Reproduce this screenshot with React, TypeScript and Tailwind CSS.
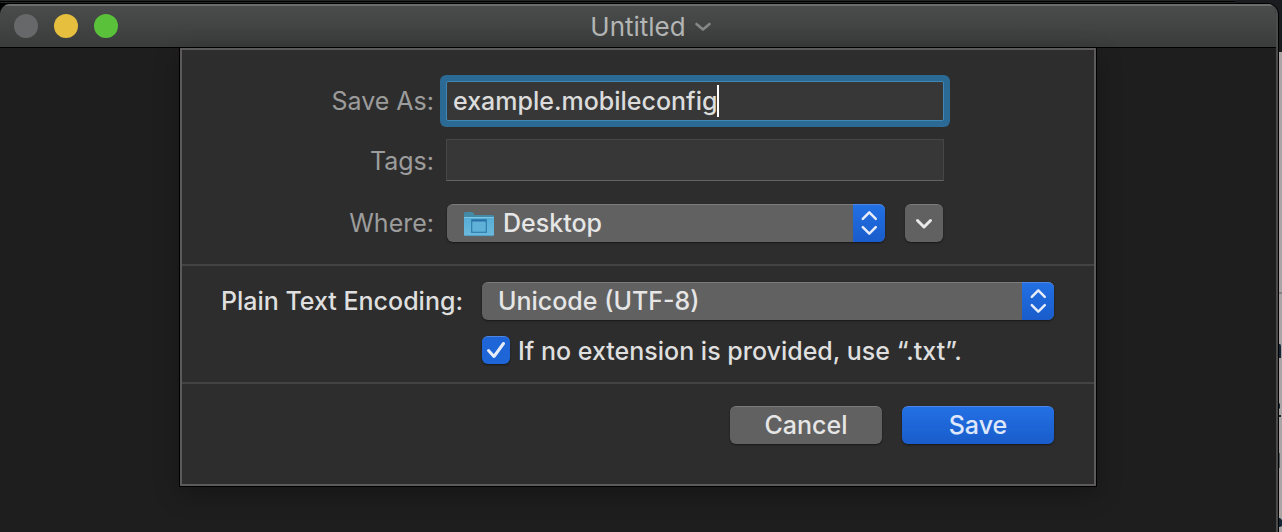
import React, { useState } from "react";

const popupClass =
  "h-full w-full cursor-default appearance-none rounded-md border-t border-[#7b7b7b] bg-[#616161] pb-0.5 pr-12 font-medium text-[#e6e6e6] shadow-[0_1px_2px_rgba(0,0,0,0.5)] outline-none";

function Stepper() {
  return (
    <span className="pointer-events-none absolute inset-y-0 right-0 flex w-8 items-center justify-center rounded-r-md border-t border-[#4c86e6] bg-gradient-to-b from-[#2270e4] to-[#1a5ccb] pb-px">
      <svg width="18" height="26" viewBox="0 0 18 26" fill="none" stroke="#e6edf9" strokeWidth="2.5" strokeLinecap="round" strokeLinejoin="round" aria-hidden="true">
        <path d="M2.800 8.800 9.300 2.300 15.800 8.800M2.800 17.200 9.300 23.700 15.800 17.200" />
      </svg>
    </span>
  );
}

function FolderIcon() {
  return (
    <svg className="pointer-events-none absolute left-[17px] top-2" width="30" height="25" viewBox="0 0 30 25" aria-hidden="true">
      <defs>
        <linearGradient id="folder" x1="0" y1="0" x2="0" y2="1">
          <stop offset="0" stopColor="#55add6" />
          <stop offset="1" stopColor="#6cb9dc" />
        </linearGradient>
      </defs>
      <path d="M0 1.5Q0 0 1.5 0H7.5Q8.8 0 9.5 1.2L10.5 3H28.5Q30 3 30 4.5V8H0Z" fill="#4389a8" />
      <path d="M0 5H30V22.5Q30 24 28.5 24H1.5Q0 24 0 22.5Z" fill="url(#folder)" />
      <path d="M0 5.5H30" stroke="#7cc5e4" />
      <path d="M1 23.7H29" stroke="#4794b8" strokeWidth="0.8" />
      <rect x="7.7" y="7.7" width="14.6" height="12.6" fill="#5fb1d7" stroke="#2f7cae" strokeWidth="1.2" />
      <path d="M8 8.700H22" stroke="#2a6fa9" strokeWidth="1.6" />
    </svg>
  );
}

export default function App() {
  const [name, setName] = useState("example.mobileconfig");
  const [tags, setTags] = useState("");
  const [addExt, setAddExt] = useState(true);

  return (
    <div className="flex min-h-screen bg-[#1b1c20] font-['Inter','Liberation_Sans',sans-serif] text-[25px] leading-8">
      <div className="flex min-w-0 flex-1 flex-col">
        <div className="mr-11 h-[3px] border-y border-[#242525] bg-black" />
        <div className="flex flex-1 flex-col rounded-tr-xl border-r border-t border-black bg-black">
          <main className="flex flex-1 flex-col overflow-hidden rounded-t-[10px] border-r-2 border-[#4b4b4b] bg-[#1e1e1e]">
            <header className="grid h-11 grid-cols-[1fr_auto_1fr] items-center border-b border-black bg-gradient-to-b from-[#4b4d4d] to-[#3a3c3b] shadow-[inset_0_2px_0_#6b6d6d]">
              <div className="flex gap-4 pl-3.5">
                <button type="button" aria-label="Close" className="size-6 rounded-full bg-[#676869]" />
                <button type="button" aria-label="Minimize" className="size-6 rounded-full bg-[#e6bf3f]" />
                <button type="button" aria-label="Zoom" className="size-6 rounded-full bg-[#59c13a]" />
              </div>
              <h1 className="pt-0.5 text-[26px] text-[#b4b6b5]">Untitled</h1>
              <button type="button" aria-label="Document options" className="ml-2 mt-0.5 justify-self-start">
                <svg width="18" height="10" viewBox="0 0 18 10" fill="none" stroke="#858786" strokeWidth="2.6" strokeLinecap="round" strokeLinejoin="round" aria-hidden="true">
                  <path d="m2.5 2 6.5 5.5L15.500 2" />
                </svg>
              </button>
            </header>

            <form
              onSubmit={(e) => e.preventDefault()}
              className="mx-auto w-full max-w-[916px] border-2 border-[#5c5a5b] bg-[#2d2d2d] text-[#dfdfdf] shadow-[0_0_0_1px_#000,0_8px_24px_rgba(0,0,0,0.3)]"
            >
              <section className="grid grid-cols-[252px_minmax(0,498px)] items-center gap-x-3 gap-y-[18px] border-b-2 border-[#434343] pb-[22px] pt-[31px]">
                <label htmlFor="name" className="text-right text-[#9c9c9c]">Save As:</label>
                <div className="flex h-10 items-center rounded-[2px] border border-[#4186b5] bg-[#373737] pl-1.5 shadow-[0_0_0_6px_#2b6a95]">
                  <input
                    id="name"
                    value={name}
                    onChange={(e) => setName(e.target.value)}
                    className="min-w-0 max-w-full bg-transparent font-medium text-[#dcdcdc] caret-transparent outline-none [field-sizing:content]"
                  />
                  <span className="h-8 w-0.5 bg-white" />
                </div>

                <label htmlFor="tags" className="pt-0.5 text-right text-[#9c9c9c]">Tags:</label>
                <input
                  id="tags"
                  value={tags}
                  onChange={(e) => setTags(e.target.value)}
                  className="h-[42px] w-full border border-[#464646] border-b-[#636363] bg-[#373737] px-2 outline-none"
                />

                <label htmlFor="where" className="mt-[5px] text-right text-[#9c9c9c]">Where:</label>
                <div className="mt-[5px] flex gap-5 px-px">
                  <div className="relative h-[38px] min-w-0 flex-1">
                    <select id="where" className={popupClass + " pl-14"}>
                      <option>Desktop</option>
                    </select>
                    <FolderIcon />
                    <Stepper />
                  </div>
                  <button type="button" aria-label="Show more locations" className="flex size-[38px] items-center justify-center rounded-md border-t border-[#7b7b7b] bg-[#616161] shadow-[0_1px_2px_rgba(0,0,0,0.5)]">
                    <svg width="18" height="12" viewBox="0 0 18 12" fill="none" stroke="#e9e9e9" strokeWidth="3" strokeLinecap="round" strokeLinejoin="round" aria-hidden="true">
                      <path d="M2.500 2.500 9 9 15.500 2.500" />
                    </svg>
                  </button>
                </div>
              </section>

              <section className="grid grid-cols-[281px_minmax(0,1fr)] items-center gap-x-[19px] gap-y-4 border-b-2 border-[#434343] pb-[18px] pr-10 pt-4">
                <label htmlFor="encoding" className="whitespace-nowrap text-right font-medium">Plain Text Encoding:</label>
                <div className="relative h-[38px]">
                  <select id="encoding" className={popupClass + " pl-4"}>
                    <option>Unicode (UTF-8)</option>
                  </select>
                  <Stepper />
                </div>
                <div className="col-start-2 flex h-7 items-center gap-2">
                  <div className="relative size-7 shrink-0">
                    <input
                      id="ext"
                      type="checkbox"
                      checked={addExt}
                      onChange={(e) => setAddExt(e.target.checked)}
                      className="peer block size-7 appearance-none rounded-md border-t border-[#7b7b7b] bg-[#616161] shadow-[0_1px_2px_rgba(0,0,0,0.5)] checked:border-[#4c86e6] checked:bg-[#1e66d8]"
                    />
                    <svg className="pointer-events-none absolute inset-0 hidden peer-checked:block" width="28" height="28" viewBox="0 0 28 28" fill="none" stroke="#e6edf9" strokeWidth="3" strokeLinecap="round" strokeLinejoin="round" aria-hidden="true">
                      <path d="M6.500 14.500 12 20.500 21.500 7.500" />
                    </svg>
                  </div>
                  <label htmlFor="ext" className="whitespace-nowrap pt-0.5 font-medium">If no extension is provided, use “.txt”.</label>
                </div>
              </section>

              <div className="flex justify-end gap-5 pb-10 pr-10 pt-[22px]">
                <button type="button" className="flex h-[38px] w-[152px] items-center justify-center rounded-md border-t border-[#7b7b7b] bg-[#616161] pb-0.5 font-medium text-[#e6e6e6] shadow-[0_1px_2px_rgba(0,0,0,0.5)]">
                  Cancel
                </button>
                <button type="submit" className="flex h-[38px] w-[152px] items-center justify-center rounded-md border-t border-[#4c86e6] bg-gradient-to-b from-[#2270e4] to-[#1a5ccb] pb-0.5 font-medium text-[#dfe8fa] shadow-[0_1px_2px_rgba(0,0,0,0.5)]">
                  Save
                </button>
              </div>
            </form>
          </main>
        </div>
      </div>
      <div className="w-[3px] shrink-0 pt-[52px]">
        <svg className="block bg-[#aaa5a4]" width="3" height="480" viewBox="0 0 3 480" aria-hidden="true">
          <path d="M0 241h3" stroke="#85818a" strokeWidth="2" />
          <path d="M0 292h1q1 0 1 3v11H0ZM0 351l1 1v4l-1 1ZM0 363h2v2H0ZM0 466h1l2 2v6l-2 1H0Z" fill="#172635" />
          <path d="M0 401h1v15H0Z" fill="#555960" />
        </svg>
      </div>
    </div>
  );
}
